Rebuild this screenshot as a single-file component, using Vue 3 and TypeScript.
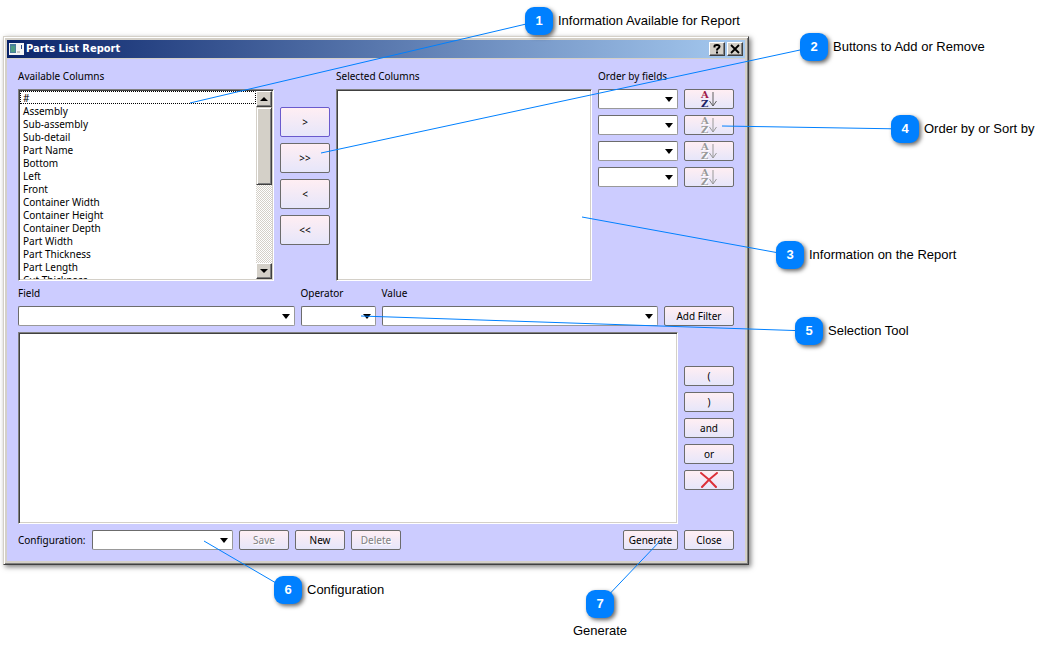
<script setup lang="ts">
import { ref } from 'vue'

interface Callout {
  id: number
  label: string
  x: number
  y: number
  targetX: number
  targetY: number
  below?: boolean
}

const CANVAS_WIDTH = 1051

const columns: string[] = [
  '#', 'Assembly', 'Sub-assembly', 'Sub-detail', 'Part Name', 'Bottom', 'Left', 'Front',
  'Container Width', 'Container Height', 'Container Depth', 'Part Width', 'Part Thickness',
  'Part Length', 'Cut Thickness',
]
const moves = [
  { text: '>', name: 'add' },
  { text: '>>', name: 'add-all' },
  { text: '<', name: 'remove' },
  { text: '<<', name: 'remove-all' },
]
const operators: string[] = ['(', ')', 'and', 'or']
const available = ref<string[]>([])
const selected = ref<string[]>([])
const list = ref<HTMLSelectElement | null>(null)

const callouts: Callout[] = [
  { id: 1, label: 'Information Available for Report', x: 539, y: 21, targetX: 190, targetY: 103 },
  { id: 2, label: 'Buttons to Add or Remove', x: 814, y: 47, targetX: 321, targetY: 153 },
  { id: 3, label: 'Information on the Report', x: 790, y: 255, targetX: 582, targetY: 217 },
  { id: 4, label: 'Order by or Sort by', x: 905, y: 129, targetX: 722, targetY: 126 },
  { id: 5, label: 'Selection Tool', x: 809, y: 331, targetX: 361, targetY: 316 },
  { id: 6, label: 'Configuration', x: 288, y: 590, targetX: 204, targetY: 541 },
  { id: 7, label: 'Generate', x: 600, y: 604, targetX: 661, targetY: 540, below: true },
]

const pct = (x: number): string => `${(x / CANVAS_WIDTH) * 100}%`

function scrollList(rows: number): void {
  list.value?.scrollBy({ top: rows * 13 })
}
</script>

<template>
  <main class="stage">
    <section class="window" aria-labelledby="window-title">
      <header class="titlebar">
        <svg class="app-icon" width="15" height="12" viewBox="0 0 15 12" aria-hidden="true">
          <rect width="15" height="12" fill="#f4f4f4" />
          <rect x="1" y="1" width="6" height="9" fill="#4b7f9c" />
          <rect x="2" y="3" width="4" height="6" fill="#4f9c84" />
          <rect x="8" y="8" width="3" height="2" fill="#c8c8c8" />
          <rect x="12" y="2" width="1" height="4" fill="#2f4a8c" />
        </svg>
        <h1 id="window-title">Parts List Report</h1>
        <button type="button" class="caption">
          <svg width="10" height="10" viewBox="0 0 10 10" aria-hidden="true">
            <path d="M2.5 3.5V2.2Q2.5 1 5 1T7.5 2.5Q7.5 3.6 6.2 4.3T5 6.5M5 7.5V9.5" fill="none" stroke="#000" stroke-width="2" />
          </svg>
        </button>
        <button type="button" class="caption">
          <svg width="10" height="10" viewBox="0 0 10 10" aria-hidden="true">
            <path d="M1 1L9 9M9 1L1 9" stroke="#000" stroke-width="1.8" />
          </svg>
        </button>
      </header>

      <form class="content" @submit.prevent>
        <div class="columns">
          <label for="available">Available Columns</label>
          <label for="selected" class="selected-label">Selected Columns</label>
          <label for="order-1">Order by fields</label>

          <div class="box">
            <select id="available" ref="list" v-model="available" multiple>
              <option v-for="c in columns" :key="c" :value="c">{{ c }}</option>
            </select>
            <div class="scrollbar">
              <button type="button" class="scroll-btn" @click="scrollList(-1)">
                <svg width="8" height="4" viewBox="0 0 8 4" aria-hidden="true"><path d="M0 4L4 0L8 4Z" /></svg>
              </button>
              <div class="track"><div class="thumb"></div></div>
              <button type="button" class="scroll-btn" @click="scrollList(1)">
                <svg width="8" height="4" viewBox="0 0 8 4" aria-hidden="true"><path d="M0 0L4 4L8 0Z" /></svg>
              </button>
            </div>
          </div>

          <div class="moves">
            <button v-for="m in moves" :key="m.name" type="button" class="btn tall" :class="m.name">{{ m.text }}</button>
          </div>

          <div class="box">
            <select id="selected" v-model="selected" multiple></select>
          </div>

          <div class="orders">
            <template v-for="n in 4" :key="n">
              <span class="combo"><select :id="`order-${n}`"></select></span>
              <button type="button" class="btn" :disabled="n > 1">
                <svg class="sort" width="18" height="18" viewBox="0 0 18 18" aria-hidden="true">
                  <text class="a" x="1" y="8">A</text>
                  <text class="z" x="1" y="17">Z</text>
                  <path d="M13 2V16M9.5 11L13 16L16.5 11" />
                </svg>
              </button>
            </template>
          </div>
        </div>

        <div class="filters">
          <label for="field">Field</label>
          <label for="operator">Operator</label>
          <label for="value" class="value-label">Value</label>
          <span class="combo"><select id="field"></select></span>
          <span class="combo"><select id="operator"></select></span>
          <span class="combo"><select id="value"></select></span>
          <button type="button" class="btn">Add Filter</button>
        </div>

        <div class="expression">
          <div class="box"><select id="expression" multiple></select></div>
          <div class="operators">
            <button v-for="o in operators" :key="o" type="button" class="btn">{{ o }}</button>
            <button type="button" class="btn">
              <svg width="18" height="16" viewBox="0 0 18 16" aria-hidden="true">
                <path d="M1 1Q9 7 16 15M17 1Q9 7 2 15" fill="none" stroke="#dc3038" stroke-width="2" stroke-linecap="round" />
              </svg>
            </button>
          </div>
        </div>

        <footer class="actions">
          <label for="configuration">Configuration:</label>
          <span class="combo config"><select id="configuration"></select></span>
          <button type="button" class="btn" disabled>Save</button>
          <button type="button" class="btn">New</button>
          <button type="button" class="btn" disabled>Delete</button>
          <button type="button" class="btn generate">Generate</button>
          <button type="button" class="btn">Close</button>
        </footer>
      </form>
    </section>

    <svg class="leaders" aria-hidden="true">
      <line
        v-for="c in callouts" :key="c.id"
        :x1="pct(c.targetX)" :y1="c.targetY" :x2="pct(c.x)" :y2="c.y"
      />
    </svg>
    <div
      v-for="c in callouts" :key="c.id" class="callout" :class="{ below: c.below }"
      :style="{ left: pct(c.x), top: `${c.y}px` }"
    >
      <span class="badge">{{ c.id }}</span>
      <span>{{ c.label }}</span>
    </div>
  </main>
</template>

<style>
body {
  margin: 0;
  background: #fff;
}
</style>

<style scoped>
* {
  box-sizing: border-box;
}

.stage {
  position: relative;
  min-height: 100vh;
  padding: 36px 302px 0 3px;
  overflow: hidden;
  font-family: "Noto Sans", sans-serif;
  font-size: 10px;
  line-height: 13px;
  color: #000;
}

.window {
  padding: 3px;
  background: #d4d0c8;
  border: 1px solid #d4d0c8;
  border-right-color: #404040;
  border-bottom-color: #404040;
  box-shadow: inset 1px 1px #fff, inset -1px -1px #808080, 2px 2px 5px rgba(0, 0, 0, 0.5);
}

.titlebar {
  display: flex;
  align-items: center;
  height: 18px;
  margin-bottom: 1px;
  padding: 0 2px;
  background: linear-gradient(90deg, #0a246a, #a6caf0);
}

.titlebar h1 {
  flex: 1;
  margin: 0 0 0 2px;
  font: bold 11px/18px "DejaVu Sans Condensed", "DejaVu Sans", sans-serif;
  color: #fff;
}

.caption,
.scroll-btn {
  display: grid;
  place-items: center;
  width: 16px;
  height: 14px;
  padding: 0;
  background: #d4d0c8;
  border: 1px solid;
  border-color: #fff #404040 #404040 #fff;
  box-shadow: inset -1px -1px #808080;
}

.caption + .caption {
  margin-left: 2px;
}

.content {
  display: grid;
  gap: 6px;
  padding: 11px;
  background: #ccf;
}

.columns {
  display: grid;
  grid-template-columns: minmax(0, 1fr) 50px minmax(0, 1fr) 136px;
  gap: 6px;
}

.selected-label {
  grid-column: 3;
}

.box {
  display: flex;
  height: 192px;
  padding: 1px;
  background: #fff;
  border: 1px solid;
  border-color: #808080 #fff #fff #808080;
  box-shadow: inset 1px 1px #404040, inset -1px -1px #d4d0c8;
}

.box select {
  flex: 1;
  min-width: 0;
  height: 100%;
  padding: 0;
  border: 0;
  outline: 0;
  background: transparent;
  font: inherit;
  color: inherit;
  overflow: hidden;
  scrollbar-width: none;
}

.box option {
  height: 13px;
  min-height: 13px;
  padding: 0 3px;
  line-height: 13px;
}

.box option:first-child {
  outline: 1px dotted #000;
  outline-offset: -1px;
}

.scrollbar {
  display: flex;
  flex-direction: column;
  width: 16px;
}

.scroll-btn {
  height: 16px;
  flex: none;
}

.track {
  flex: 1;
  background: repeating-conic-gradient(#d4d0c8 0 25%, #fff 0 50%) 0 0 / 2px 2px;
}

.thumb {
  height: 50%;
  background: #d4d0c8;
  border: 1px solid;
  border-color: #d4d0c8 #404040 #404040 #d4d0c8;
  box-shadow: inset 1px 1px #fff, inset -1px -1px #808080;
}

.moves {
  display: grid;
  align-content: center;
  gap: 6px;
  padding-bottom: 18px;
}

.orders {
  display: grid;
  grid-template-columns: minmax(0, 1fr) 50px;
  align-content: start;
  gap: 6px;
}

.combo {
  position: relative;
  display: block;
  height: 20px;
}

.combo select {
  display: block;
  width: 100%;
  height: 100%;
  padding: 0 18px 0 4px;
  appearance: none;
  background: #fff;
  border: 1px solid #6c6c6c;
  border-right-color: #999;
  border-bottom-color: #999;
  border-radius: 2px;
  font: inherit;
}

.combo::after {
  content: "";
  position: absolute;
  top: 8px;
  right: 5px;
  border: 4px solid transparent;
  border-top: 5px solid #000;
  border-bottom: 0;
  pointer-events: none;
}

.btn {
  display: grid;
  place-items: center;
  min-width: 50px;
  height: 20px;
  padding: 0;
  background: linear-gradient(#ffeef3, #e6e6fa);
  border: 1px solid #6c6c6c;
  border-radius: 2px;
  font: inherit;
  color: #000;
}

.btn.tall {
  height: 30px;
}

.btn.add {
  border-color: #6a5acd;
}

.btn:disabled {
  color: #808080;
  text-shadow: 1px 1px #fff;
}

.sort text {
  font: bold 10px "DejaVu Serif", serif;
}

.sort .a {
  fill: #a01848;
}

.sort .z {
  fill: #202468;
}

.sort path {
  fill: none;
  stroke: #606060;
  stroke-width: 1px;
}

.btn:disabled .sort text {
  fill: #999;
}

.btn:disabled .sort path {
  stroke: #999;
}

.filters {
  display: grid;
  grid-template-columns: minmax(0, 1fr) 75px minmax(0, 1fr) 70px;
  gap: 6px;
}

.value-label {
  grid-column: 3 / 5;
}

.expression {
  display: grid;
  grid-template-columns: minmax(0, 1fr) 50px;
  gap: 6px;
}

.operators {
  display: grid;
  align-content: center;
  gap: 6px;
}

.actions {
  display: flex;
  align-items: center;
  gap: 6px;
}

.actions label {
  width: 68px;
}

.config {
  flex: 0 1 141px;
}

.generate {
  width: 55px;
  margin-left: auto;
}

.leaders {
  position: absolute;
  inset: 0;
  width: 100%;
  height: 100%;
  pointer-events: none;
}

.leaders line {
  stroke: #0080ff;
  stroke-width: 1px;
}

.callout {
  position: absolute;
  display: flex;
  align-items: center;
  gap: 5px;
  margin: -14px 0 0 -14px;
  font: 13px/16px "Liberation Sans", Arial, sans-serif;
  white-space: nowrap;
}

.callout.below {
  flex-direction: column;
  width: 60px;
  margin-left: -30px;
}

.badge {
  width: 28px;
  height: 28px;
  border-radius: 9px;
  background: #0080ff;
  box-shadow: 2px 2px 4px rgba(0, 0, 0, 0.6);
  font-weight: bold;
  line-height: 28px;
  text-align: center;
  color: #fff;
}
</style>
